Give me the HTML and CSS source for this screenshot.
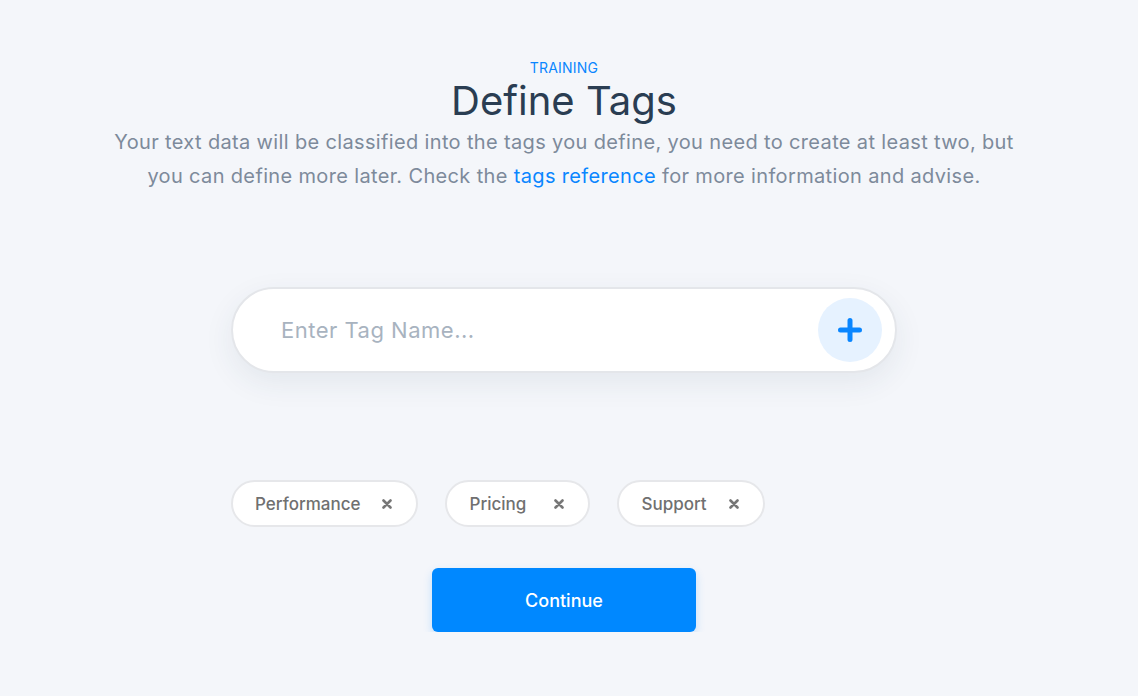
FILE: index.html
```html
<!DOCTYPE html>
<html lang="en">
<head>
<meta charset="utf-8">
<title>Define Tags</title>
<link rel="stylesheet" href="styles.css">
</head>
<body>
<main class="page">
  <header class="intro">
    <p class="eyebrow">TRAINING</p>
    <h1 class="title">Define Tags</h1>
    <p class="lead">Your text data will be classified into the tags you define, you need to create at least two, but you can define more later. Check the <a class="link" href="#">tags reference</a> for more information and advise.</p>
  </header>

  <section class="composer">
    <div class="tag-input">
      <input class="tag-field" type="text" placeholder="Enter Tag Name...">
      <button class="add-btn" type="button" aria-label="Add tag">
        <svg width="28" height="28" viewBox="0 0 28 28"><path d="M14 4.5v19M4.5 14h19" stroke="#0a86ff" stroke-width="5" stroke-linecap="round" fill="none"/></svg>
      </button>
    </div>

    <ul class="tags">
      <li class="tag"><span class="tag-label">Performance</span><span class="tag-x" aria-hidden="true"><svg width="10" height="10" viewBox="0 0 10 10"><path d="M1.5 1.5l7 7M8.5 1.5l-7 7" stroke="#777" stroke-width="2.6" stroke-linecap="round"/></svg></span></li>
      <li class="tag"><span class="tag-label">Pricing</span><span class="tag-x" aria-hidden="true"><svg width="10" height="10" viewBox="0 0 10 10"><path d="M1.5 1.5l7 7M8.5 1.5l-7 7" stroke="#777" stroke-width="2.6" stroke-linecap="round"/></svg></span></li>
      <li class="tag"><span class="tag-label">Support</span><span class="tag-x" aria-hidden="true"><svg width="10" height="10" viewBox="0 0 10 10"><path d="M1.5 1.5l7 7M8.5 1.5l-7 7" stroke="#777" stroke-width="2.6" stroke-linecap="round"/></svg></span></li>
    </ul>

    <div class="actions">
      <button class="continue" type="button">Continue</button>
    </div>
  </section>
</main>
</body>
</html>
```

FILE: styles.css
```css
* { box-sizing: border-box; }

html, body {
  margin: 0;
  background: #f4f6fa;
}

body {
  font-family: "Inter", "Noto Sans", "Liberation Sans", sans-serif;
  color: #2a3d52;
  padding-right: 10px;
}

.page {
  padding-top: 59px;
  display: flex;
  flex-direction: column;
  align-items: center;
}

.intro {
  text-align: center;
  width: 915px;
}

.eyebrow {
  margin: 0;
  font-size: 14px;
  line-height: 18px;
  color: #0a86ff;
  letter-spacing: 0.2px;
}

.title {
  margin: 0;
  font-size: 40px;
  font-weight: 400;
  line-height: 48px;
  color: #2a3d52;
}

.lead {
  margin: 0;
  font-size: 20px;
  letter-spacing: 0.35px;
  line-height: 34px;
  color: #7d8a9b;
}

.link {
  color: #0a86ff;
  text-decoration: none;
}

.composer {
  width: 666px;
  margin-top: 94px;
  display: flex;
  flex-direction: column;
}

.tag-input {
  height: 86px;
  background: #fff;
  border: 2px solid #e4e6ea;
  border-radius: 43px;
  box-shadow: 0 10px 30px rgba(40, 60, 90, 0.08);
  display: flex;
  align-items: center;
  padding: 0 13px 0 48px;
}

.tag-field {
  flex: 1;
  border: 0;
  outline: none;
  background: transparent;
  font-family: inherit;
  font-size: 22px;
  letter-spacing: 0.5px;
  color: #2a3d52;
  padding: 0;
}

.tag-field::placeholder {
  color: #a8b3bf;
}

.add-btn {
  width: 64px;
  height: 64px;
  border-radius: 50%;
  border: 0;
  background: #e6f2ff;
  display: flex;
  align-items: center;
  justify-content: center;
  padding: 0;
}

.tags {
  list-style: none;
  margin: 107px 0 0;
  padding: 0;
  display: flex;
  gap: 27px;
}

.tag {
  height: 47px;
  min-width: 145px;
  background: #fff;
  border: 2px solid #e6e7ea;
  border-radius: 24px;
  display: flex;
  align-items: center;
  justify-content: space-between;
  padding: 0 24px 0 22px;
  gap: 22px;
  font-size: 17px;
  font-weight: 500;
  color: #707070;
}

.tag-x {
  display: flex;
  align-items: center;
}

.actions {
  display: flex;
  justify-content: center;
  margin-top: 41px;
}

.continue {
  width: 264px;
  height: 64px;
  border: 0;
  border-radius: 6px;
  background: #0088ff;
  color: #fff;
  font-family: inherit;
  font-size: 18px;
  font-weight: 500;
  box-shadow: 0 4px 10px rgba(0, 136, 255, 0.2);
}
```
